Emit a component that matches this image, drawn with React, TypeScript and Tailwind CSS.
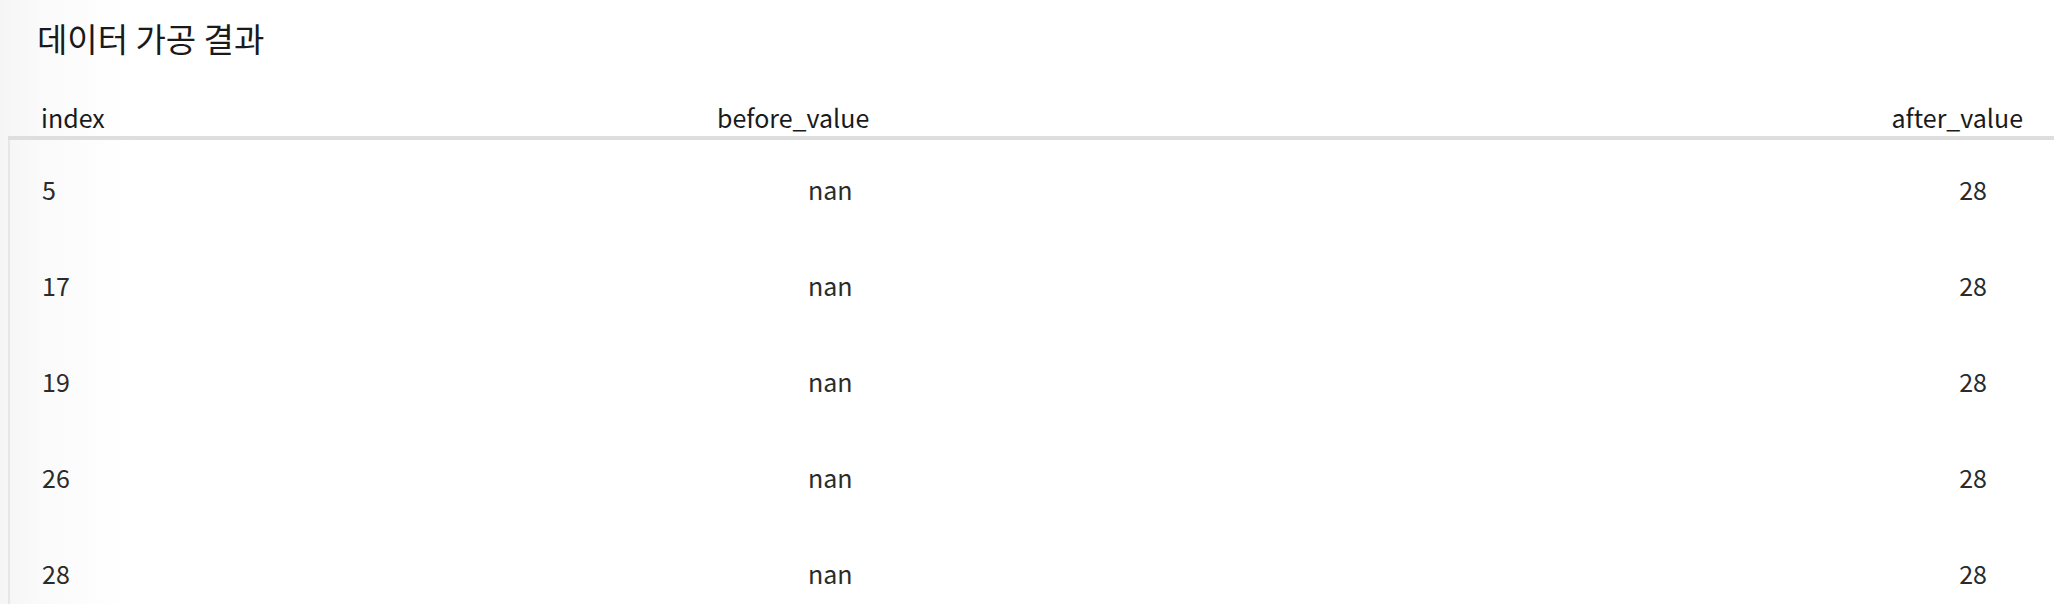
import React from "react";

const rows = ["5", "17", "19", "26", "28"];

export default function App() {
  return (
    <div
      className="w-[2054px] h-[604px] overflow-hidden bg-[linear-gradient(to_right,#f5f5f5_0px,#fafafa_40px,#ffffff_130px)] text-[#262730]"
      style={{ fontFamily: '"Noto Sans CJK KR", "Noto Sans", sans-serif' }}
    >
      <h2 className="pl-[37px] pt-[17px] text-[33px] leading-[42px] font-normal text-[#1a1a1a]">
        데이터 가공 결과
      </h2>
      <div className="ml-[8px] mt-[40px]">
        <div className="flex items-center h-[41px] pl-[33px] pr-[31px] text-[25px] text-[#1a1a1a] border-b-4 border-[#dedede]">
          <div className="w-[676px]">index</div>
          <div className="flex-1">before_value</div>
          <div>after_value</div>
        </div>
        <div className="border-l-2 border-[#e6e6e6] pt-[2px]">
          {rows.map((r) => (
            <div key={r} className="flex items-center h-[96px] pl-[32px] pr-[67px] text-[25px] text-[#2b2b2b]">
              <div className="w-[766px]">{r}</div>
              <div className="flex-1">nan</div>
              <div>28</div>
            </div>
          ))}
        </div>
      </div>
    </div>
  );
}
